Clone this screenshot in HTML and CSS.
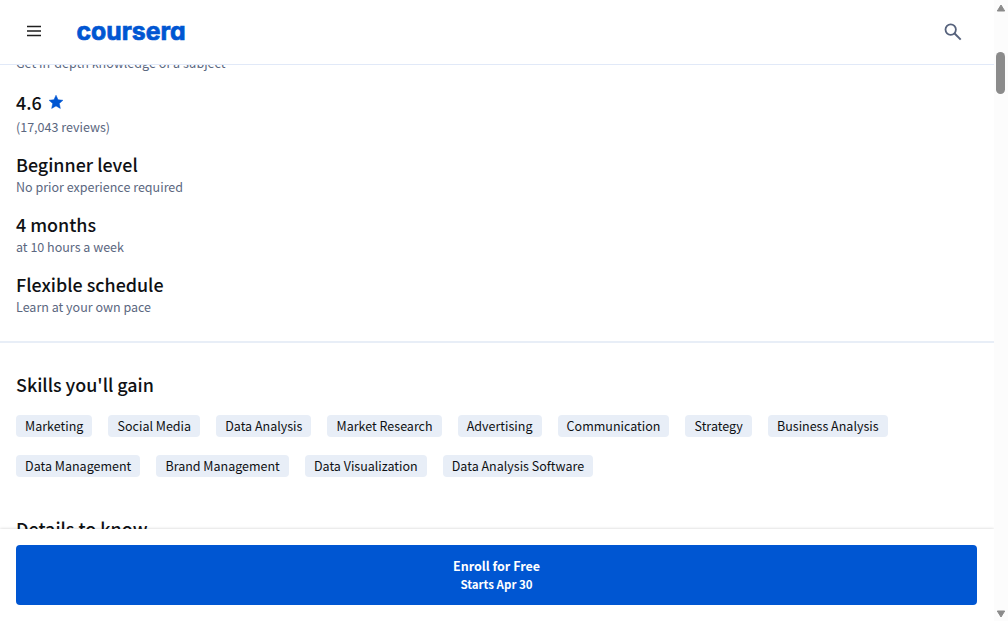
FILE: index.html
```html
<!DOCTYPE html>
<html lang="en">
<head>
<meta charset="utf-8">
<title>Coursera</title>
<link rel="stylesheet" href="styles.css">
</head>
<body>
<div class="page">
  <header class="header">
    <svg class="menu" width="16" height="12" viewBox="0 0 16 12"><path d="M1 1.5h14M1 6h14M1 10.5h14" stroke="#1f1f1f" stroke-width="1.6"/></svg>
    <svg class="logo" width="112" height="34" viewBox="0 0 112 34" role="img" aria-label="coursera"><text x="0.5" y="25" textLength="109" lengthAdjust="spacingAndGlyphs">coursera</text></svg>
    <svg class="search" width="18" height="18" viewBox="0 0 18 18" fill="none" stroke="#56627c"><circle cx="6.7" cy="6.6" r="5.2" stroke-width="1.8"/><path d="M10.4 10.3l6.3 6.3" stroke-width="2"/></svg>
  </header>
  <main class="content">
    <div class="facts">
      <section class="fact"><p class="note">Get in-depth knowledge of a subject</p></section>
      <section class="fact rating">
        <h2 class="title">4.6 <svg class="star" width="14" height="14" viewBox="0 0 14 14"><path d="M7 .2l2.05 4.5 4.9.55-3.65 3.3 1.03 4.85L7 10.95 2.67 13.4 3.7 8.55.05 5.25l4.9-.55z" fill="#0056d2" stroke="#0056d2" stroke-width=".5" stroke-linejoin="round"/></svg></h2>
        <p class="note">(17,043 reviews)</p>
      </section>
      <section class="fact"><h2 class="title">Beginner level</h2><p class="note">No prior experience required</p></section>
      <section class="fact"><h2 class="title">4 months</h2><p class="note">at 10 hours a week</p></section>
      <section class="fact"><h2 class="title">Flexible schedule</h2><p class="note">Learn at your own pace</p></section>
    </div>
    <section class="skills">
      <h2 class="title">Skills you'll gain</h2>
      <ul class="tags">
        <li class="tag">Marketing</li><li class="tag">Social Media</li><li class="tag">Data Analysis</li><li class="tag">Market Research</li><li class="tag">Advertising</li><li class="tag">Communication</li><li class="tag">Strategy</li><li class="tag">Business Analysis</li><li class="tag">Data Management</li><li class="tag">Brand Management</li><li class="tag">Data Visualization</li><li class="tag">Data Analysis Software</li>
      </ul>
      <h2 class="title details">Details to know</h2>
    </section>
  </main>
  <footer class="enroll">
    <button class="button"><span class="main-label">Enroll for Free</span><span class="sub-label">Starts Apr 30</span></button>
  </footer>
</div>
<div class="scrollbar">
  <svg width="10" height="8" viewBox="0 0 10 8"><path d="M5 1L8.7 7H1.3z" fill="#8b8b8b" stroke="#8b8b8b" stroke-linejoin="round"/></svg>
  <div class="thumb"></div>
  <svg class="down" width="10" height="8" viewBox="0 0 10 8"><path d="M5 7L8.7 1H1.3z" fill="#8b8b8b" stroke="#8b8b8b" stroke-linejoin="round"/></svg>
</div>
</body>
</html>
```
FILE: styles.css
```css
* { box-sizing: border-box; margin: 0; padding: 0; }
body {
  display: flex;
  height: 621px;
  overflow: hidden;
  background: #fff;
  color: #0f1114;
  font-family: "Noto Sans CJK SC", "Noto Sans", sans-serif;
}
.page { flex: 1; display: flex; flex-direction: column; min-width: 0; }
.header {
  flex: none;
  height: 65px;
  display: flex;
  align-items: center;
  padding: 0 32px 0 26px;
  border-bottom: 1px solid #e1e9f8;
}
.menu { margin-top: -2px; }
.logo { margin-left: 34px; overflow: visible; }
.logo text {
  font: 700 25px Inter, sans-serif;
  font-feature-settings: "cv11";
  fill: #0056d2;
  stroke: #0056d2;
  stroke-width: .7px;
}
.search { margin-left: auto; }
.content { flex: 1; min-height: 0; overflow: hidden; }
.facts {
  display: flex;
  flex-direction: column;
  gap: 15px;
  margin-top: -12px;
  padding: 0 16px 24px;
  border-bottom: 2px solid #e8eef7;
}
.title { font-size: 17.9px; line-height: 24px; font-weight: 500; }
.note { font-size: 12.52px; line-height: 20px; color: #5b6780; }
.fact .title { margin-bottom: 1px; }
.rating .title { display: flex; align-items: center; gap: 7px; height: 28px; }
.skills { padding: 29px 16px 0; }
.tags { list-style: none; display: flex; flex-wrap: wrap; gap: 18px 16px; margin-top: 19px; }
.tag {
  height: 22px;
  padding: 0 9.08px;
  border-radius: 4px;
  background: #e8eef7;
  font-size: 12.5px;
  line-height: 22px;
}
.details { margin-top: 39px; }
.enroll {
  flex: none;
  height: 92px;
  padding: 16px 17px 16px 16px;
  background: #fff;
  box-shadow: 0 0 3px rgba(0, 0, 0, .2);
  clip-path: inset(-4px 0 0 0);
}
.button {
  display: flex;
  flex-direction: column;
  align-items: center;
  justify-content: center;
  width: 100%;
  height: 60px;
  border: 0;
  border-radius: 4px;
  background: #0056d2;
  color: #fff;
  font-family: inherit;
  font-weight: 700;
}
.main-label { font-size: 12.5px; line-height: 18px; }
.sub-label { font-size: 11.5px; line-height: 18px; }
.scrollbar {
  flex: none;
  width: 14px;
  display: flex;
  flex-direction: column;
  align-items: center;
  padding: 4px 1px 3px 0;
  background: #fcfcfc;
}
.thumb { width: 9px; height: 42px; margin-top: 40px; border-radius: 5px; background: #8b8b8b; }
.down { margin-top: auto; }
```
